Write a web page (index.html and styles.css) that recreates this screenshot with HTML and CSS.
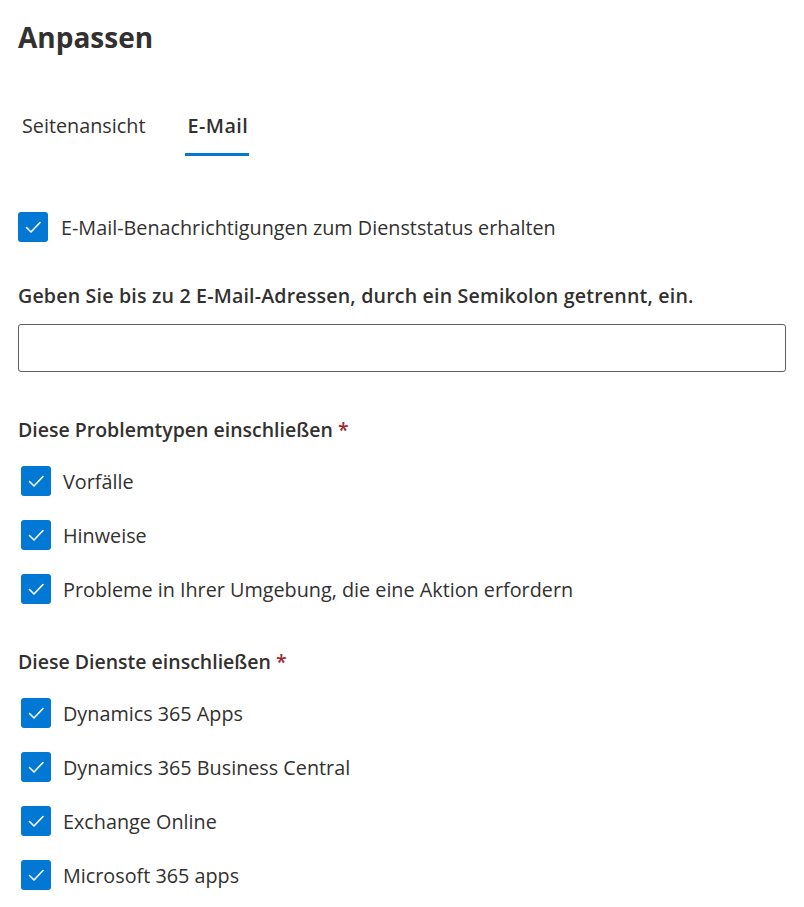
FILE: index.html
```html
<!DOCTYPE html>
<html lang="de">
<head>
<meta charset="utf-8">
<link rel="stylesheet" href="styles.css">
</head>
<body>
<div class="page">
  <h1 class="title">Anpassen</h1>
  <div class="tabs">
    <div class="tab">Seitenansicht</div>
    <div class="tab active">E-Mail</div>
  </div>
  <label class="check main">
    <span class="box"><svg viewBox="0 0 30 30"><path d="M8.5 15.5l4.5 4.5 9-9.5"/></svg></span>
    <span class="text">E-Mail-Benachrichtigungen zum Dienststatus erhalten</span>
  </label>
  <div class="field-label">Geben Sie bis zu 2 E-Mail-Adressen, durch ein Semikolon getrennt, ein.</div>
  <div class="input"></div>
  <div class="group-label">Diese Problemtypen einschließen <span class="req">*</span></div>
  <div class="group">
    <label class="check"><span class="box"><svg viewBox="0 0 30 30"><path d="M8.5 15.5l4.5 4.5 9-9.5"/></svg></span><span class="text">Vorfälle</span></label>
    <label class="check"><span class="box"><svg viewBox="0 0 30 30"><path d="M8.5 15.5l4.5 4.5 9-9.5"/></svg></span><span class="text">Hinweise</span></label>
    <label class="check"><span class="box"><svg viewBox="0 0 30 30"><path d="M8.5 15.5l4.5 4.5 9-9.5"/></svg></span><span class="text">Probleme in Ihrer Umgebung, die eine Aktion erfordern</span></label>
  </div>
  <div class="group-label">Diese Dienste einschließen <span class="req">*</span></div>
  <div class="group">
    <label class="check"><span class="box"><svg viewBox="0 0 30 30"><path d="M8.5 15.5l4.5 4.5 9-9.5"/></svg></span><span class="text">Dynamics 365 Apps</span></label>
    <label class="check"><span class="box"><svg viewBox="0 0 30 30"><path d="M8.5 15.5l4.5 4.5 9-9.5"/></svg></span><span class="text">Dynamics 365 Business Central</span></label>
    <label class="check"><span class="box"><svg viewBox="0 0 30 30"><path d="M8.5 15.5l4.5 4.5 9-9.5"/></svg></span><span class="text">Exchange Online</span></label>
    <label class="check"><span class="box"><svg viewBox="0 0 30 30"><path d="M8.5 15.5l4.5 4.5 9-9.5"/></svg></span><span class="text">Microsoft 365 apps</span></label>
  </div>
</div>
</body>
</html>
```
FILE: styles.css
```css
html, body {
  margin: 0;
  padding: 0;
  background: #fff;
}
body {
  font-family: "Open Sans", "Noto Sans", sans-serif;
  color: #323130;
  overflow: hidden;
}
.page {
  padding: 18px 18px 0 18px;
}
.title {
  margin: 0;
  font-size: 28px;
  font-weight: 700;
  line-height: 38px;
}
.tabs {
  display: flex;
  gap: 42px;
  margin-top: 56px;
  padding-left: 4px;
}
.tab {
  font-size: 19.8px;
  line-height: 28px;
  padding-bottom: 13px;
  border-bottom: 3px solid transparent;
}
.tab.active {
  font-weight: 600;
  border-bottom-color: #0078d4;
  margin-left: -2px;
  padding: 0 1px 13px 2px;
  letter-spacing: 0.45px;
}
.check {
  display: flex;
  align-items: center;
  gap: 12px;
  height: 30px;
}
.check.main {
  margin-top: 56px;
  gap: 13px;
}
.box {
  width: 30px;
  height: 30px;
  background: #0078d4;
  border-radius: 3px;
  flex: none;
  display: flex;
}
.box svg {
  width: 30px;
  height: 30px;
}
.box path {
  fill: none;
  stroke: #fff;
  stroke-width: 1.6;
  stroke-linecap: round;
  stroke-linejoin: round;
}
.text {
  font-size: 19.8px;
  white-space: nowrap;
}
.field-label {
  margin-top: 41px;
  font-size: 19.6px;
  font-weight: 600;
  line-height: 26px;
  letter-spacing: 0.18px;
}
.input {
  margin-top: 15px;
  border: 1px solid #605e5c;
  border-radius: 3px;
  box-sizing: border-box;
  height: 48px;
}
.group-label {
  margin-top: 45px;
  font-size: 19.5px;
  font-weight: 600;
  line-height: 26px;
}
.req {
  color: #a4262c;
}
.group {
  display: flex;
  flex-direction: column;
  gap: 24px;
  padding-left: 3px;
  margin-top: 23px;
}
```
